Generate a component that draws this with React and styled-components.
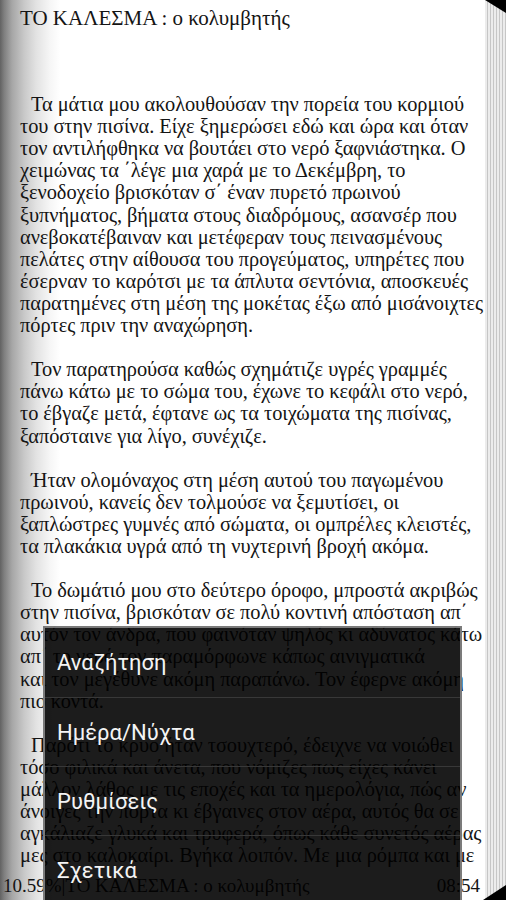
import React from "react";
import styled, { createGlobalStyle } from "styled-components";

const Global = createGlobalStyle`
  html, body { margin: 0; padding: 0; background: #fff; }
  body { width: 506px; height: 900px; overflow: hidden; }
  #root { width: 506px; height: 900px; }
`;

const Screen = styled.div`
  position: relative;
  display: flex;
  width: 506px;
  height: 900px;
  overflow: hidden;
  font-family: "Liberation Serif", "DejaVu Serif", serif;
  color: #141414;
`;

const Paper = styled.div`
  flex: 1;
  display: flex;
  flex-direction: column;
  min-width: 0;
  background: linear-gradient(
    90deg,
    #626262 0px,
    #7e7e7e 4px,
    #a6a6a6 12px,
    #c8c8c8 24px,
    #e2e2e2 36px,
    #f6f6f6 50px,
    #ffffff 60px
  );
`;

const Content = styled.div`
  padding: 7px 0 0 20px;
  font-size: 20.4px;
  letter-spacing: -0.05px;
  line-height: 22.1px;
`;

const Title = styled.div`
  white-space: nowrap;
  font-size: 21px;
  letter-spacing: 0;
  margin-bottom: 64px;
`;

const Paragraph = styled.div`
  & + & { margin-top: 22.1px; }
`;

const Line = styled.div`
  white-space: nowrap;
  padding-left: ${(p) => (p.$indent ? "11px" : "0")};
`;

const Footer = styled.div`
  margin-top: auto;
  display: flex;
  justify-content: space-between;
  padding: 0 5px 3px 3px;
  font-size: 19px;
  line-height: 22px;
  white-space: nowrap;
`;

const Edge = styled.div`
  position: relative;
  width: 21px;
  flex: none;
  background: repeating-linear-gradient(
    90deg,
    #ececec 0px,
    #ececec 2px,
    #c6c6c6 2px,
    #c6c6c6 3px
  );
  &::before {
    content: "";
    position: absolute;
    top: 0;
    right: 0;
    width: 21px;
    height: 13px;
    background: #000;
    clip-path: polygon(0 0, 100% 0, 100% 100%);
  }
  &::after {
    content: "";
    position: absolute;
    bottom: 0;
    right: 0;
    width: 23px;
    height: 15px;
    background: #000;
    clip-path: polygon(100% 0, 100% 100%, 0 100%);
  }
`;

const Menu = styled.div`
  position: absolute;
  left: 43px;
  top: 626px;
  width: 419px;
  height: 290px;
  box-sizing: border-box;
  background: rgba(0, 0, 0, 0.89);
  border: 2px solid rgba(140, 140, 140, 0.85);
  border-bottom: none;
  font-family: Roboto, "Noto Sans", sans-serif;
`;

const MenuItem = styled.div`
  height: 69px;
  box-sizing: border-box;
  display: flex;
  align-items: center;
  padding-left: 12px;
  font-size: 22px;
  color: #f4f4f4;
  & + & { border-top: 1px solid #383838; }
`;

const paragraphs = [
  [
    "Τα μάτια μου ακολουθούσαν την πορεία του κορμιού",
    "του στην πισίνα. Είχε ξημερώσει εδώ και ώρα και όταν",
    "τον αντιλήφθηκα να βουτάει στο νερό ξαφνιάστηκα. Ο",
    "χειμώνας τα ΄λέγε μια χαρά με το Δεκέμβρη, το",
    "ξενοδοχείο βρισκόταν σ΄ έναν πυρετό πρωινού",
    "ξυπνήματος, βήματα στους διαδρόμους, ασανσέρ που",
    "ανεβοκατέβαιναν και μετέφεραν τους πεινασμένους",
    "πελάτες στην αίθουσα του προγεύματος, υπηρέτες που",
    "έσερναν το καρότσι με τα άπλυτα σεντόνια, αποσκευές",
    "παρατημένες στη μέση της μοκέτας έξω από μισάνοιχτες",
    "πόρτες πριν την αναχώρηση.",
  ],
  [
    "Τον παρατηρούσα καθώς σχημάτιζε υγρές γραμμές",
    "πάνω κάτω με το σώμα του, έχωνε το κεφάλι στο νερό,",
    "το έβγαζε μετά, έφτανε ως τα τοιχώματα της πισίνας,",
    "ξαπόσταινε για λίγο, συνέχιζε.",
  ],
  [
    "Ήταν ολομόναχος στη μέση αυτού του παγωμένου",
    "πρωινού, κανείς δεν τολμούσε να ξεμυτίσει, οι",
    "ξαπλώστρες γυμνές από σώματα, οι ομπρέλες κλειστές,",
    "τα πλακάκια υγρά από τη νυχτερινή βροχή ακόμα.",
  ],
  [
    "Το δωμάτιό μου στο δεύτερο όροφο, μπροστά ακριβώς",
    "στην πισίνα, βρισκόταν σε πολύ κοντινή απόσταση απ΄",
    "αυτόν τον άνδρα, που φαινόταν ψηλός κι αδύνατος κάτω",
    "απ΄ το νερό τον παραμόρφωνε κάπως αινιγματικά",
    "και τον μεγέθυνε ακόμη παραπάνω. Τον έφερνε ακόμη",
    "πιο κοντά.",
  ],
  [
    "Παρότι το κρύο ήταν τσουχτερό, έδειχνε να νοιώθει",
    "τόσο φιλικά και άνετα, που νόμιζες πως είχες κάνει",
    "μάλλον λάθος με τις εποχές και τα ημερολόγια, πώς αν",
    "άνοιγες την πόρτα κι έβγαινες στον αέρα, αυτός θα σε",
    "αγκάλιαζε γλυκά και τρυφερά, όπως κάθε συνετός αέρας",
    "μες στο καλοκαίρι. Βγήκα λοιπόν. Με μια ρόμπα και με",
  ],
];

const menuItems = ["Αναζήτηση", "Ημέρα/Νύχτα", "Ρυθμίσεις", "Σχετικά"];

export default function App() {
  return (
    <>
      <Global />
      <Screen>
        <Paper>
          <Content>
            <Title>ΤΟ ΚΑΛΕΣΜΑ : ο κολυμβητής</Title>
            {paragraphs.map((lines, i) => (
              <Paragraph key={i}>
                {lines.map((l, j) => (
                  <Line key={j} $indent={j === 0}>
                    {l}
                  </Line>
                ))}
              </Paragraph>
            ))}
          </Content>
          <Footer>
            <span>10.59%|ΤΟ ΚΑΛΕΣΜΑ : ο κολυμβητής</span>
            <span>08:54</span>
          </Footer>
        </Paper>
        <Edge />
        <Menu>
          {menuItems.map((m) => (
            <MenuItem key={m}>{m}</MenuItem>
          ))}
        </Menu>
      </Screen>
    </>
  );
}
